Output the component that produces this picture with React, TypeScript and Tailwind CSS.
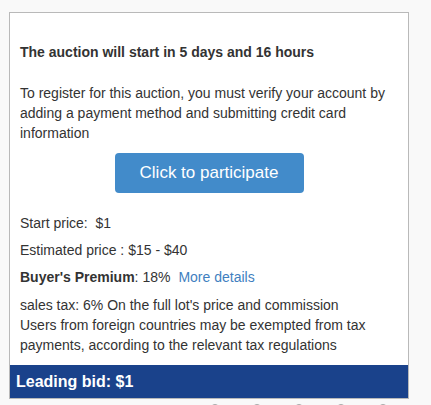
export default function App() {
  return (
    <div
      className="min-h-[405px] bg-[#f9f9f9] pl-[9px] pt-[12px]"
      style={{ fontFamily: '"Liberation Sans", Arial, sans-serif' }}
    >
      <div className="w-[400px] border border-[#b9b9b9] bg-white">
        {/* Body */}
        <div className="px-[10px] pt-[29px] text-[14px] leading-[20px] text-[#333]">
          <p className="font-bold">The auction will start in 5 days and 16 hours</p>
          <p className="mt-[21px]">
            To register for this auction, you must verify your account by adding a payment method and
            submitting credit card information
          </p>
          <div className="mt-[10px] flex justify-center">
            <button className="h-[40px] w-[189px] rounded-[4px] bg-[#428bca] text-[17px] text-white">
              Click to participate
            </button>
          </div>
          <p className="mt-[20px]">Start price:{"\u00a0 "}$1</p>
          <p className="mt-[7px]">Estimated price : $15 - $40</p>
          <p className="mt-[7px]">
            <b>Buyer's Premium</b>: 18%
            <a className="ml-[8px] text-[#3f7fbf]">More details</a>
          </p>
          <p className="mt-[8px] pb-[10px]">
            sales tax: 6% On the full lot's price and commission
            <br />
            Users from foreign countries may be exempted from tax payments, according to the relevant
            tax regulations
          </p>
        </div>

        {/* Leading bid */}
        <div className="flex h-[33px] items-center bg-[#1a428b] px-[6px] text-[16px] font-bold text-white">
          Leading bid: $1
        </div>
      </div>

      {/* Dots */}
      <div className="flex h-[6px] gap-[32px] overflow-hidden pl-[201px] pt-[5px]">
        {[0, 1, 2, 3, 4].map((i) => (
          <span key={i} className="block h-[10px] w-[10px] shrink-0 rounded-full border border-[#aaa]" />
        ))}
      </div>
    </div>
  );
}
